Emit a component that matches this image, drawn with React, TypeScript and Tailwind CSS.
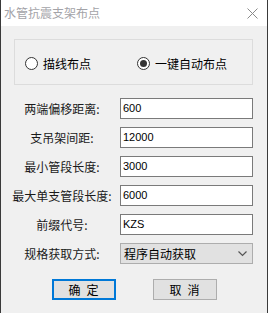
import React from "react";

const font = { fontFamily: '"Noto Sans CJK SC", "Liberation Sans", sans-serif' };

function Radio({ checked, label }: { checked?: boolean; label: string }) {
  return (
    <div className="flex items-center gap-[5px]">
      <div className="w-[13px] h-[13px] rounded-full border border-[#333333] bg-white flex items-center justify-center">
        {checked && <div className="w-[7px] h-[7px] rounded-full bg-[#333333]" />}
      </div>
      <span className="text-[12px] leading-[14px] text-black">{label}</span>
    </div>
  );
}

function Row({ label, children }: { label: string; children: React.ReactNode }) {
  return (
    <div className="flex items-center h-[21px]">
      <div className="w-[108px] ml-[7px] mr-[4px] text-center text-[12px] leading-[14px] text-[#1a1a1a] whitespace-nowrap">
        {label}
      </div>
      {children}
    </div>
  );
}

function Input({ value }: { value: string }) {
  return (
    <div
      className="w-[133px] h-[21px] bg-white border border-[#7a7a7a] flex items-center pl-[2px] text-[11px] text-black"
      style={{ fontFamily: '"Liberation Sans", sans-serif' }}
    >
      {value}
    </div>
  );
}

export default function App() {
  return (
    <div className="w-[268px] h-[313px] flex flex-col border-x border-[#3a3a3a] bg-[#f0f0f0]" style={font}>
      <div className="h-[26px] bg-white flex items-center justify-between pl-[3px] pr-[9px]">
        <span className="text-[12px] leading-[14px] text-[#a3a3a8]">水管抗震支架布点</span>
        <svg width="11" height="11" viewBox="0 0 11 11">
          <path d="M0.5 0.5 L10.5 10.5 M10.5 0.5 L0.5 10.5" stroke="#8a8a8a" strokeWidth="1" />
        </svg>
      </div>
      <div className="flex flex-col pt-[13px]">
        <div className="ml-[13px] w-[239px] h-[46px] border border-[#dcdcdc] flex items-center pt-[3px] pl-[10px]">
          <div className="w-[112px]">
            <Radio label="描线布点" />
          </div>
          <Radio checked label="一键自动布点" />
        </div>
        <div className="flex flex-col gap-[8px] mt-[13px]">
          <Row label="两端偏移距离:">
            <Input value="600" />
          </Row>
          <Row label="支吊架间距:">
            <Input value="12000" />
          </Row>
          <Row label="最小管段长度:">
            <Input value="3000" />
          </Row>
          <Row label="最大单支管段长度:">
            <Input value="6000" />
          </Row>
          <Row label="前缀代号:">
            <Input value="KZS" />
          </Row>
          <Row label="规格获取方式:">
            <div className="w-[133px] h-[21px] bg-[#e1e1e1] border border-[#adadad] flex items-center justify-between pl-[3px] pr-[5px]">
              <span className="text-[12px] leading-[14px] text-black">程序自动获取</span>
              <svg width="9" height="6" viewBox="0 0 9 6">
                <path d="M0.5 0.5 L4.5 4.5 L8.5 0.5" stroke="#555" strokeWidth="1.2" fill="none" />
              </svg>
            </div>
          </Row>
        </div>
        <div className="flex justify-center gap-[37px] mt-[15px]">
          <div className="w-[64px] h-[21px] bg-[#e1e1e1] border-2 border-[#0078d7] flex items-center justify-center gap-[6px] text-[12px] leading-[14px] text-black">
            <span>确</span>
            <span>定</span>
          </div>
          <div className="w-[64px] h-[21px] bg-[#e1e1e1] border border-[#adadad] flex items-center justify-center gap-[6px] text-[12px] leading-[14px] text-black">
            <span>取</span>
            <span>消</span>
          </div>
        </div>
      </div>
    </div>
  );
}
